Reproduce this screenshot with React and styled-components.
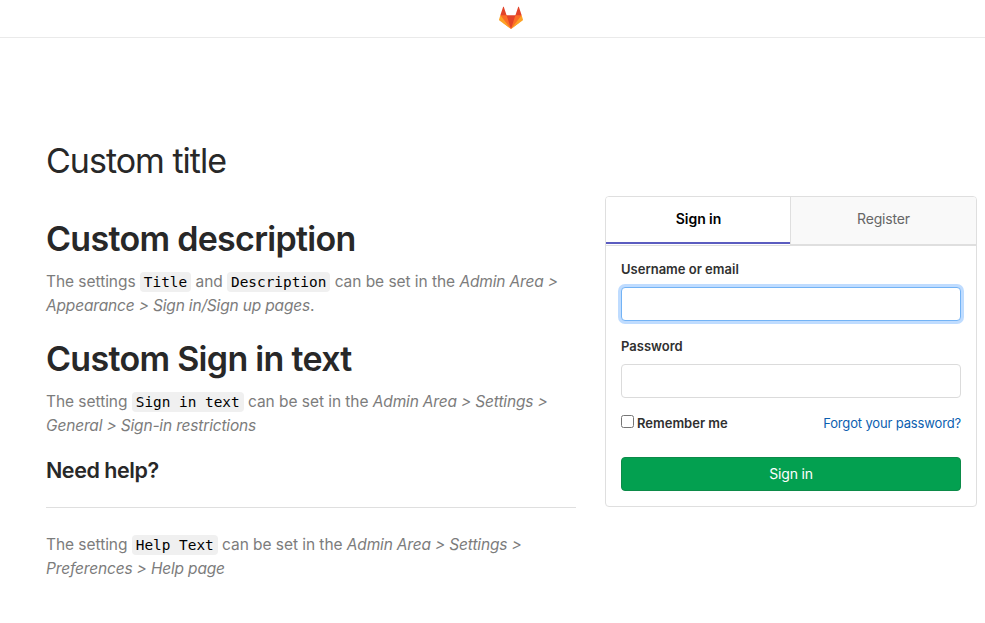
import React from "react";
import styled, { createGlobalStyle } from "styled-components";

const GlobalStyle = createGlobalStyle`
  *, *::before, *::after { box-sizing: border-box; }
  body {
    margin: 0;
    background: #fff;
    color: #303030;
    font-family: Inter, "Liberation Sans", sans-serif;
    font-size: 14px;
  }
  h1, h2, h3, p, form { margin: 0; }
`;

const Header = styled.header`
  height: 38px;
  display: flex;
  justify-content: center;
  padding: 6px 0 0 37px;
  border-bottom: 1px solid #eaeaea;
`;

const Main = styled.main`
  display: flex;
  align-items: flex-start;
  gap: 29px;
  padding: 103px 8px 0 46px;
`;

const Brand = styled.section`
  width: 530px;
  flex: none;
`;

const Title = styled.h1`
  font-size: 34px;
  line-height: 40px;
  font-weight: 400;
  letter-spacing: -1px;
  color: #282828;
  margin-bottom: 38px;
`;

const Heading = styled.h2`
  font-size: 34px;
  line-height: 40px;
  font-weight: 600;
  letter-spacing: -0.7px;
  color: #282828;
  margin-bottom: 11px;
`;

const Subheading = styled.h3`
  font-size: 21.5px;
  line-height: 28px;
  font-weight: 600;
  letter-spacing: -0.45px;
  color: #282828;
  margin-top: 18px;
`;

const Text = styled.p`
  font-size: 15.5px;
  line-height: 24px;
  letter-spacing: -0.05px;
  color: #7c7c7c;
  margin-bottom: ${(p) => p.$gap || 0}px;
  white-space: nowrap;

  em { letter-spacing: -0.17px; }
`;

const Code = styled.code`
  font-family: "DejaVu Sans Mono", monospace;
  font-size: 14.4px;
  line-height: 17px;
  letter-spacing: 0;
  color: #000;
  background: #f0f0f0;
  border-radius: 4px;
  padding: 2px 4px;
`;

const Rule = styled.hr`
  border: 0;
  border-top: 1px solid #dfdfdf;
  margin: 23px 0 25px;
`;

const Panel = styled.section`
  flex: 1;
  margin-top: 55px;
  height: 311px;
  border: 1px solid #dfdfdf;
  border-radius: 4px;
`;

const Tabs = styled.div`
  display: flex;
  height: 49px;
  border-bottom: 1px solid #dfdfdf;
`;

const Tab = styled.button`
  flex: ${(p) => (p.$active ? "0 0 184px" : "1")};
  border: 0;
  border-left: ${(p) => (p.$active ? "0" : "1px solid #dfdfdf")};
  border-bottom: ${(p) => (p.$active ? "2px solid #5b5cc0" : "1px solid #dfdfdf")};
  border-radius: ${(p) => (p.$active ? "3px 0 0 0" : "0 3px 0 0")};
  background: ${(p) => (p.$active ? "#fff" : "#f9f9f9")};
  color: ${(p) => (p.$active ? "#000" : "#666")};
  font: ${(p) => (p.$active ? 600 : 400)} 14px Inter, sans-serif;
  letter-spacing: ${(p) => (p.$active ? "-0.05px" : "-0.15px")};
  padding: ${(p) => (p.$active ? "0 0 2px 1px" : "0 0 4px")};
  margin-bottom: ${(p) => (p.$active ? "1px" : "0")};
`;

const Form = styled.form`
  display: flex;
  flex-direction: column;
  padding: 14px 15px 15px;
`;

const Label = styled.label`
  font-size: 13px;
  line-height: 18px;
  font-weight: 600;
  color: #303030;
`;

const Field = styled.input`
  height: 34px;
  width: 100%;
  margin: 9px 0 16px;
  padding: 6px 10px;
  border: 1px solid ${(p) => (p.$focused ? "#73b3f5" : "#dbdbdb")};
  border-radius: 4px;
  outline: 0;
  box-shadow: ${(p) => (p.$focused ? "0 0 0 3px #bfdcff" : "none")};
`;

const Options = styled.div`
  display: flex;
  justify-content: space-between;
  height: 18px;
  margin-bottom: 25px;
`;

const Remember = styled(Label)`
  display: flex;
  gap: 3px;
`;

const Checkbox = styled.input`
  width: 13px;
  height: 13px;
  margin: 1px 0 0;
`;

const Link = styled.a`
  font-size: 13px;
  line-height: 18px;
  letter-spacing: -0.15px;
  color: #0b5fb0;
`;

const Submit = styled.button`
  height: 34px;
  padding: 0 0 1px;
  border: 1px solid #0c8b49;
  border-radius: 4px;
  background: #03a050;
  color: #fff;
  font: 400 14px Inter, sans-serif;
  letter-spacing: -0.2px;
`;

function Logo() {
  return (
    <svg width="24" height="24" viewBox="0 0 36 36" aria-label="GitLab">
      <path fill="#e24329" d="M2 14l9.38 9v-9l-4-12.28c-.205-.632-1.176-.632-1.38 0z" />
      <path fill="#e24329" d="M34 14l-9.38 9v-9l4-12.28c.205-.632 1.176-.632 1.38 0z" />
      <path fill="#e24329" d="M18 34.38L3 14h30z" />
      <path fill="#fc6d26" d="M18 34.38L11.38 14H2l4 11z" />
      <path fill="#fc6d26" d="M18 34.38L24.62 14H34l-4 11z" />
      <path fill="#fca326" d="M2 14L.1 20.16c-.18.565 0 1.2.5 1.56L18 34.38z" />
      <path fill="#fca326" d="M34 14l1.9 6.16c.18.565 0 1.2-.5 1.56L18 34.38z" />
    </svg>
  );
}

export default function App() {
  return (
    <>
      <GlobalStyle />
      <Header><Logo /></Header>
      <Main>
        <Brand>
          <Title>Custom title</Title>
          <Heading>Custom description</Heading>
          <Text $gap={21}>
            The settings <Code>Title</Code> and <Code>Description</Code> can be set in the <em>Admin Area &gt;</em>
            <br />
            <em>Appearance &gt; Sign in/Sign up pages</em>.
          </Text>
          <Heading>Custom Sign in text</Heading>
          <Text>
            The setting <Code>Sign in text</Code> can be set in the <em>Admin Area &gt; Settings &gt;</em>
            <br />
            <em>General &gt; Sign-in restrictions</em>
          </Text>
          <Subheading>Need help?</Subheading>
          <Rule />
          <Text>
            The setting <Code>Help Text</Code> can be set in the <em>Admin Area &gt; Settings &gt;</em>
            <br />
            <em>Preferences &gt; Help page</em>
          </Text>
        </Brand>
        <Panel>
          <Tabs>
            <Tab $active>Sign in</Tab>
            <Tab>Register</Tab>
          </Tabs>
          <Form>
            <Label htmlFor="login">Username or email</Label>
            <Field id="login" $focused />
            <Label htmlFor="password">Password</Label>
            <Field id="password" type="password" />
            <Options>
              <Remember><Checkbox type="checkbox" />Remember me</Remember>
              <Link>Forgot your password?</Link>
            </Options>
            <Submit type="button">Sign in</Submit>
          </Form>
        </Panel>
      </Main>
    </>
  );
}
